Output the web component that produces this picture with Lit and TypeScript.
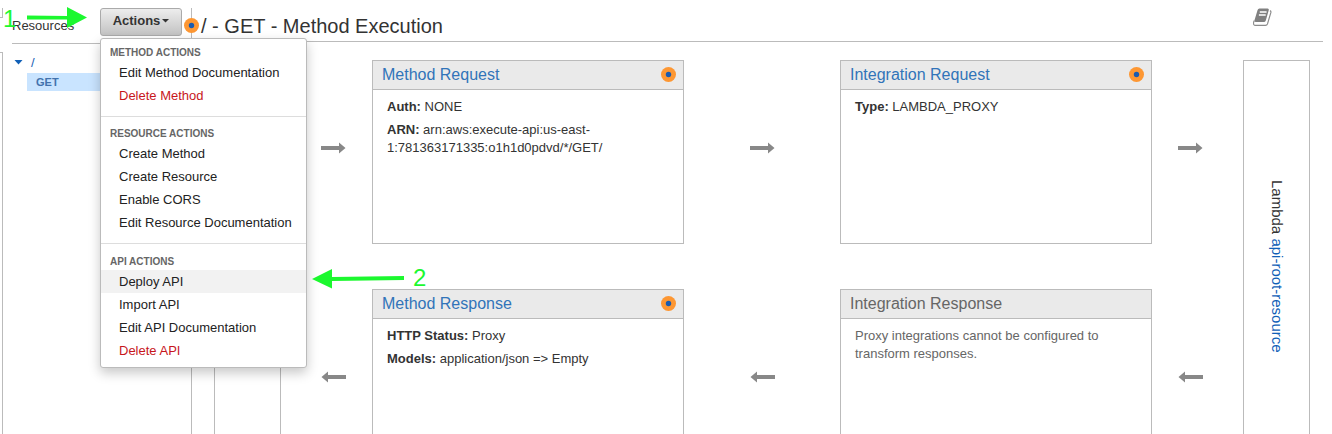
import { LitElement, html, svg, css, nothing } from "lit";
import { customElement, property } from "lit/decorators.js";

interface MenuItem {
  label: string;
  danger?: boolean;
  active?: boolean;
}

interface MenuSection {
  title: string;
  items: MenuItem[];
}

const MENU: MenuSection[] = [
  {
    title: "METHOD ACTIONS",
    items: [{ label: "Edit Method Documentation" }, { label: "Delete Method", danger: true }],
  },
  {
    title: "RESOURCE ACTIONS",
    items: [
      { label: "Create Method" },
      { label: "Create Resource" },
      { label: "Enable CORS" },
      { label: "Edit Resource Documentation" },
    ],
  },
  {
    title: "API ACTIONS",
    items: [
      { label: "Deploy API", active: true },
      { label: "Import API" },
      { label: "Edit API Documentation" },
      { label: "Delete API", danger: true },
    ],
  },
];

@customElement("status-dot")
class StatusDot extends LitElement {
  static styles = css`
    :host {
      display: block;
      width: 15px;
      height: 15px;
    }
    svg {
      display: block;
    }
  `;
  render() {
    return html`<svg width="15" height="15" viewBox="0 0 15 15" aria-hidden="true">
      <circle cx="7.5" cy="7.5" r="7.5" fill="#fd9733" />
      <circle cx="7.5" cy="7.5" r="2.7" fill="#1a5bb0" />
    </svg>`;
  }
}

@customElement("flow-arrow")
class FlowArrow extends LitElement {
  @property() direction = "right";

  static styles = css`
    :host {
      display: block;
      width: 25px;
      height: 12px;
    }
    svg {
      display: block;
    }
  `;
  render() {
    const shape =
      this.direction === "right"
        ? svg`<path d="M0 4H18V0.5L24.5 6L18 11.5V8H0Z" fill="#888" />`
        : svg`<path d="M25 4H7V0.5L0.5 6L7 11.5V8H25Z" fill="#888" />`;
    return html`<svg width="25" height="12" viewBox="0 0 25 12" aria-hidden="true">${shape}</svg>`;
  }
}

@customElement("stage-card")
class StageCard extends LitElement {
  @property() heading = "";
  @property({ type: Boolean }) disabled = false;

  static styles = css`
    :host {
      display: block;
      box-sizing: border-box;
      min-height: 184px;
      border: 1px solid #bbb;
      background: #fff;
      color: #333;
    }
    .head {
      display: flex;
      align-items: center;
      justify-content: space-between;
      padding: 0 7px 0 9px;
      border-bottom: 1px solid #bbb;
      background: #eaeaea;
    }
    .title {
      margin: 0;
      font-size: 16px;
      font-weight: 400;
      line-height: 28px;
    }
    .link {
      color: #3174b9;
      text-decoration: none;
    }
    .muted {
      color: #666;
    }
    .dot {
      margin-bottom: 2px;
    }
    .body {
      display: flex;
      flex-direction: column;
      gap: 5px;
      padding: 8px 14px;
      font-size: 13px;
      line-height: 18px;
    }
  `;
  render() {
    return html`
      <div class="head">
        <h2 class="title">
          ${this.disabled
            ? html`<span class="muted">${this.heading}</span>`
            : html`<a class="link" href="#">${this.heading}</a>`}
        </h2>
        ${this.disabled ? nothing : html`<status-dot class="dot"></status-dot>`}
      </div>
      <div class="body ${this.disabled ? "muted" : ""}"><slot></slot></div>
    `;
  }
}

@customElement("actions-menu")
class ActionsMenu extends LitElement {
  static styles = css`
    :host {
      display: block;
      position: relative;
    }
    .toggle {
      display: flex;
      align-items: center;
      justify-content: center;
      gap: 2px;
      box-sizing: border-box;
      width: 82px;
      height: 28px;
      padding: 0 0 2px;
      border: 1px solid #aaa;
      border-radius: 3px;
      background: linear-gradient(#ededed, #c2c2c2);
      color: #333;
      font: bold 13px/18px "Liberation Sans", Arial, sans-serif;
    }
    .menu {
      position: absolute;
      z-index: 2;
      top: 30px;
      left: 0;
      box-sizing: border-box;
      width: 207px;
      padding: 5px 0;
      border: 1px solid #bbb;
      border-radius: 3px;
      background: #fff;
      box-shadow: 0 5px 12px rgba(0, 0, 0, 0.22);
    }
    .section + .section {
      margin-top: 9px;
      padding-top: 9px;
      border-top: 1px solid #ddd;
    }
    .label {
      margin: 0;
      padding: 0 9px;
      color: #666;
      font-size: 10px;
      font-weight: 700;
      line-height: 16px;
    }
    .list {
      margin: 0;
      padding: 0;
      list-style: none;
    }
    .item {
      display: block;
      padding: 0 18px;
      color: #222;
      font-size: 13px;
      line-height: 23px;
      white-space: nowrap;
      text-decoration: none;
    }
    .section:first-child .label {
      line-height: 17px;
    }
    .section:last-child .label {
      line-height: 17px;
    }
    .danger {
      color: #c7161c;
    }
    .active {
      background: #f2f2f2;
    }
  `;
  render() {
    return html`
      <button class="toggle" type="button" aria-haspopup="true" aria-expanded="true">
        Actions
        <svg width="7" height="4" viewBox="0 0 7 4" aria-hidden="true"><path d="M0 0H7L3.5 3.6Z" fill="#333" /></svg>
      </button>
      <div class="menu">
        ${MENU.map(
          (section) => html`<div class="section">
            <h3 class="label">${section.title}</h3>
            <ul class="list">
              ${section.items.map(
                (item) => html`<li>
                  <a class="item ${item.danger ? "danger" : ""} ${item.active ? "active" : ""}" href="#">${item.label}</a>
                </li>`
              )}
            </ul>
          </div>`
        )}
      </div>
    `;
  }
}

@customElement("app-root")
class AppRoot extends LitElement {
  static styles = css`
    :host {
      display: flex;
      position: relative;
      box-sizing: border-box;
      height: 100vh;
      padding: 8px 9px 0 0;
      overflow: hidden;
      background: #fff;
      color: #333;
      font-family: "Liberation Sans", Arial, sans-serif;
      font-size: 13px;
      line-height: 18px;
    }
    .rail {
      display: flex;
      flex: none;
      flex-direction: column;
      gap: 34px;
      box-sizing: border-box;
      width: 3px;
    }
    .rail-top {
      height: 9px;
      border: solid #bbb;
      border-width: 0 1px 1px 0;
    }
    .rail-rest {
      flex: 1;
      border: solid #bbb;
      border-width: 1px 1px 0 0;
    }
    .sidebar {
      flex: none;
      box-sizing: border-box;
      width: 189px;
      padding-left: 9px;
      border-right: 1px solid #bbb;
    }
    .side-head {
      display: flex;
      justify-content: space-between;
      height: 35px;
      padding-right: 9px;
      border-bottom: 1px solid #bbb;
    }
    .side-title {
      margin: 0;
      font-size: 13px;
      font-weight: 400;
      line-height: 35px;
    }
    .tree,
    .branch {
      margin: 0;
      padding: 0;
      list-style: none;
    }
    .tree {
      padding-top: 8px;
    }
    .node {
      display: flex;
      align-items: center;
      gap: 8px;
      padding: 0 2px;
      line-height: 21px;
    }
    .node-link {
      color: #1a5fb4;
      text-decoration: none;
    }
    .branch {
      padding-left: 15px;
    }
    .verb {
      display: block;
      padding: 0 9px;
      background: #c9e4ff;
      color: #4272ad;
      font-size: 11px;
      font-weight: 700;
      text-decoration: none;
    }
    .main {
      flex: 1;
      min-width: 0;
    }
    .main-head {
      display: flex;
      align-items: flex-start;
      justify-content: space-between;
      position: relative;
      height: 33px;
      padding: 0 51px 0 9px;
      border-bottom: 1px solid #bbb;
    }
    .head-dot {
      position: absolute;
      top: 10px;
      left: -8px;
    }
    .title {
      margin: 0;
      font-size: 20px;
      font-weight: 400;
      line-height: 36px;
    }
    .docs {
      display: block;
      height: 20px;
      padding: 0;
      border: 0;
      background: none;
    }
    .flow {
      display: grid;
      grid-template-columns: 67px 7fr 24fr 12fr 24fr 7fr 67px;
      row-gap: 45px;
      padding: 18px 13px 18px 22px;
    }
    .endpoint {
      display: flex;
      grid-row: 1 / span 2;
      align-items: center;
      justify-content: center;
      border: 1px solid #bbb;
      font-size: 15px;
      line-height: 18px;
      writing-mode: vertical-rl;
    }
    .client {
      grid-column: 1;
    }
    .backend {
      grid-column: 7;
    }
    .fn-link {
      color: #1160b7;
      text-decoration: none;
    }
    .arrow {
      align-self: center;
      justify-self: center;
      padding-bottom: 8px;
    }
    .first {
      justify-self: end;
      padding-right: 26px;
    }
    .last {
      justify-self: start;
      padding-left: 26px;
    }
    .notes {
      position: absolute;
      z-index: 3;
      top: 0;
      left: 0;
      pointer-events: none;
    }
    .note-text {
      fill: #1cf82f;
      font-size: 24px;
    }
  `;

  render() {
    return html`
      <div class="rail">
        <div class="rail-top"></div>
        <div class="rail-rest"></div>
      </div>

      <nav class="sidebar">
        <div class="side-head">
          <h2 class="side-title">Resources</h2>
          <actions-menu></actions-menu>
        </div>
        <ul class="tree">
          <li>
            <div class="node">
              <svg width="9" height="5" viewBox="0 0 9 5" aria-hidden="true"><path d="M0.5 0H8.5L4.5 4.6Z" fill="#1160b7" /></svg>
              <a class="node-link" href="#">/</a>
            </div>
            <ul class="branch">
              <li><a class="verb" href="#">GET</a></li>
            </ul>
          </li>
        </ul>
      </nav>

      <main class="main">
        <header class="main-head">
          <status-dot class="head-dot"></status-dot>
          <h1 class="title">/ - GET - Method Execution</h1>
          <button class="docs" type="button" aria-label="Documentation">
            <svg width="20" height="20" viewBox="0 0 20 20" aria-hidden="true">
              <path d="M7.4 0.5H15.6Q17.2 0.5 16.8 2L13.8 12.4Q13.3 14 11.8 14H3.6Q2.2 14 2.4 12.6L5.6 2Q6 0.5 7.4 0.5Z" fill="#808080" />
              <path d="M2.3 12.6Q1 14.6 1.6 16.2Q2.2 17.4 3.6 17.4H13.4Q15 17.4 15.5 15.9L18.9 4.4Q19.2 3.2 18 2.6" fill="none" stroke="#8c8c8c" stroke-width="1.2" />
              <path d="M7.8 3.9H14.6M6.9 6.9H13.7" stroke="#fff" stroke-width="1.5" />
            </svg>
          </button>
        </header>

        <div class="flow">
          <div class="endpoint client"></div>
          <flow-arrow class="arrow first"></flow-arrow>
          <stage-card heading="Method Request">
            <div><b>Auth:</b> NONE</div>
            <div><b>ARN:</b> arn:aws:execute-api:us-east-1:781363171335:o1h1d0pdvd/*/GET/</div>
          </stage-card>
          <flow-arrow class="arrow"></flow-arrow>
          <stage-card heading="Integration Request">
            <div><b>Type:</b> LAMBDA_PROXY</div>
          </stage-card>
          <flow-arrow class="arrow last"></flow-arrow>
          <div class="endpoint backend">
            <div>Lambda <a class="fn-link" href="#">api-root-resource</a></div>
          </div>

          <flow-arrow class="arrow first" direction="left"></flow-arrow>
          <stage-card heading="Method Response">
            <div><b>HTTP Status:</b> Proxy</div>
            <div><b>Models:</b> application/json =&gt; Empty</div>
          </stage-card>
          <flow-arrow class="arrow" direction="left"></flow-arrow>
          <stage-card heading="Integration Response" disabled>
            <div>Proxy integrations cannot be configured to transform responses.</div>
          </stage-card>
          <flow-arrow class="arrow last" direction="left"></flow-arrow>
        </div>
      </main>

      <svg class="notes" width="440" height="300" viewBox="0 0 440 300">
        <text class="note-text" x="3" y="27">1</text>
        <path d="M27 15.5L67 16V7L87 17.5L67 28V19.5L27 19.5Z" fill="#1cf82f" />
        <text class="note-text" x="413" y="286">2</text>
        <path d="M404 276L332 277V269L312 279L332 288.5V281L404 280Z" fill="#1cf82f" />
      </svg>
    `;
  }
}
